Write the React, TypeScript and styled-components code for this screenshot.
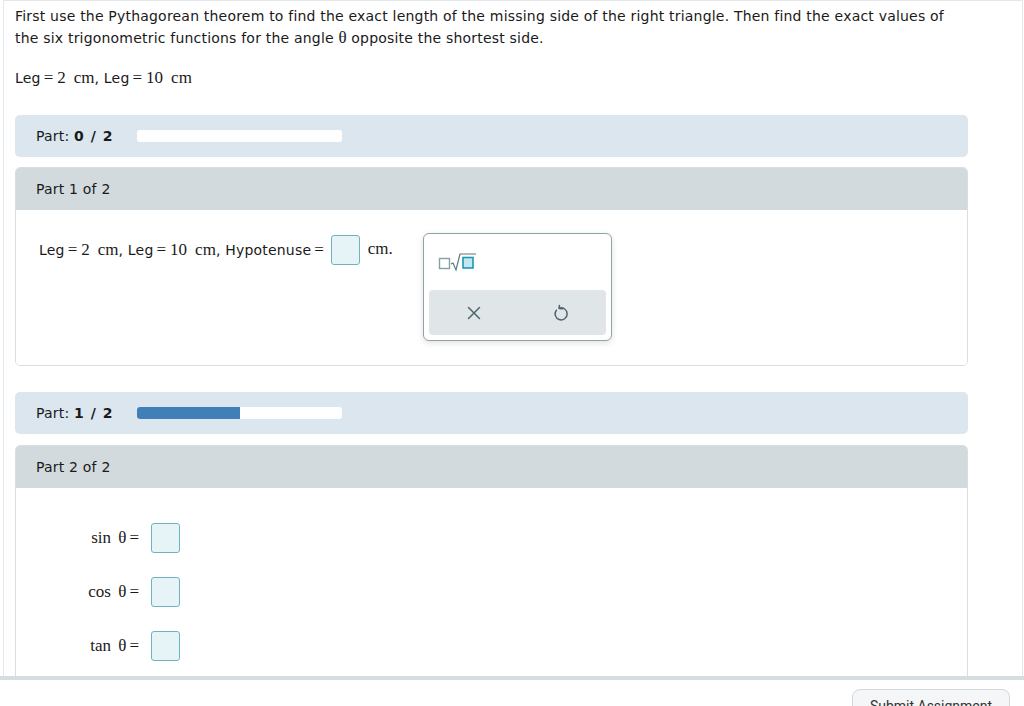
import React from 'react';
import styled, { createGlobalStyle } from 'styled-components';

const GlobalStyle = createGlobalStyle`
  html, body {
    margin: 0;
    padding: 0;
    background: #fff;
  }
  body {
    font-family: "DejaVu Sans", Verdana, sans-serif;
    color: #1a1a1a;
  }
`;

const Page = styled.div`
  width: 1024px;
  height: 706px;
  display: flex;
  flex-direction: column;
  overflow: hidden;
`;

const Main = styled.div`
  flex: 1;
  min-height: 0;
  overflow: hidden;
  margin-left: 3px;
  width: 1020px;
  box-sizing: border-box;
  border: 1px solid #e4e8ea;
  border-bottom: none;
  padding: 5px 54px 0 11px;
`;

const Footer = styled.div`
  height: 30px;
  border-top: 4px solid #d5dde0;
  display: flex;
  justify-content: flex-end;
  align-items: flex-start;
  padding: 9px 14px 0 0;
  box-sizing: border-box;
  overflow: hidden;
`;

const SubmitButton = styled.button`
  flex: none;
  width: 158px;
  height: 40px;
  border: 1px solid #cfd8dc;
  border-radius: 8px;
  background: #f4f6f7;
  font-family: Roboto, "Liberation Sans", sans-serif;
  font-size: 14px;
  line-height: 16px;
  color: #333;
  padding: 8px 0 0;
  margin: 0;
  display: flex;
  justify-content: center;
  align-items: flex-start;
`;

const Intro = styled.p`
  margin: 0;
  font-size: 14px;
  letter-spacing: 0.2px;
  line-height: 21px;
  width: 952px;
`;

const Given = styled.p`
  margin: 18px 0 0;
  font-size: 14px;
  letter-spacing: 0.2px;
  line-height: 22px;
`;

const Serif = styled.span`
  font-family: "Liberation Serif", "Times New Roman", serif;
  font-size: 17px;
  letter-spacing: 0;
`;

const MathUnit = styled(Serif)`
  margin-left: 8px;
`;

const Eq = styled.span`
  font-family: "Liberation Serif", serif;
  font-size: 17px;
  letter-spacing: 0;
  margin: 0 4px 0 3px;
`;

const ProgressBar = styled.div<{ $top: number }>`
  margin-top: ${(p) => p.$top}px;
  height: 42px;
  background: #dbe6ef;
  border-radius: 5px;
  display: flex;
  align-items: center;
  padding-left: 21px;
  font-size: 14px;
  letter-spacing: 0.2px;
`;

const PartLabel = styled.span`
  width: 101px;
  white-space: nowrap;
  b {
    font-weight: bold;
    letter-spacing: 1px;
  }
`;

const Track = styled.div`
  width: 205px;
  height: 12px;
  background: #fff;
  border-radius: 3px;
  overflow: hidden;
`;

const Fill = styled.div`
  height: 100%;
  background: #4180b6;
`;

const Card = styled.div<{ $top: number }>`
  margin-top: ${(p) => p.$top}px;
  border: 1px solid #d8dfe2;
  border-radius: 5px;
  overflow: hidden;
`;

const CardHeader = styled.div`
  height: 42px;
  background: #d2dadd;
  display: flex;
  align-items: center;
  padding-left: 20px;
  font-size: 14px;
  letter-spacing: 0.2px;
`;

const CardBody = styled.div<{ $height: number }>`
  position: relative;
  height: ${(p) => p.$height}px;
  background: #fff;
`;

const QuestionLine = styled.div`
  display: flex;
  align-items: center;
  padding: 25px 0 0 23px;
  font-size: 14px;
  letter-spacing: 0.2px;
`;

const AnswerBox = styled.span<{ $ml?: number }>`
  display: inline-block;
  width: 27px;
  height: 28px;
  background: #e6f4f8;
  border: 1px solid #6db3c2;
  border-radius: 3px;
  margin-left: ${(p) => p.$ml ?? 0}px;
`;

const Unit = styled.span`
  font-family: "Liberation Serif", serif;
  font-size: 17px;
  letter-spacing: 0;
  margin-left: 8px;
  position: relative;
  top: -1px;
`;

const Palette = styled.div`
  position: absolute;
  left: 407px;
  top: 23px;
  width: 189px;
  height: 108px;
  border: 1px solid #8fa3a9;
  border-radius: 6px;
  background: #fff;
  box-shadow: 0 2px 6px rgba(0, 0, 0, 0.12);
  display: flex;
  flex-direction: column;
  padding: 0 5px 5px;
  box-sizing: border-box;
`;

const TemplateRow = styled.div`
  height: 56px;
  display: flex;
  align-items: center;
  padding-left: 9px;
`;

const ToolRow = styled.div`
  flex: 1;
  background: #e0e6e8;
  border-radius: 4px;
  display: flex;
  justify-content: space-around;
  align-items: center;
  padding: 0 2px;
`;

const ToolButton = styled.span`
  width: 24px;
  height: 24px;
  display: flex;
  align-items: center;
  justify-content: center;
`;

const TrigGrid = styled.div`
  display: grid;
  grid-template-columns: 127px auto;
  column-gap: 8px;
  row-gap: 24px;
  padding-top: 35px;
  align-items: center;
  justify-items: start;
`;

const TrigLabel = styled.span`
  justify-self: end;
  font-family: "Liberation Serif", serif;
  font-size: 17px;
  word-spacing: 3px;
`;

function SqrtTemplate() {
  return (
    <svg width="40" height="20" viewBox="0 0 40 20">
      <rect x="1.5" y="6.5" width="10" height="10" fill="none" stroke="#8a9ea4" strokeWidth="1.4" />
      <path d="M13 12 L15 11 L18 18 L22 2 L38 2" fill="none" stroke="#5c7880" strokeWidth="1.2" />
      <rect x="25" y="5.5" width="10" height="10.5" fill="#c4e6ee" stroke="#1c9ab2" strokeWidth="1.6" />
    </svg>
  );
}

function ClearIcon() {
  return (
    <svg width="16" height="16" viewBox="0 0 16 16">
      <path d="M2.5 2.5 L13.5 13.5 M13.5 2.5 L2.5 13.5" stroke="#4a6670" strokeWidth="1.5" strokeLinecap="round" />
    </svg>
  );
}

function UndoIcon() {
  return (
    <svg width="18" height="18" viewBox="0 0 18 18">
      <path d="M7.2 4.2 A6 6 0 1 1 4.4 6.2" fill="none" stroke="#4a6670" strokeWidth="1.5" strokeLinecap="round" />
      <path d="M7.4 1.4 L7.2 4.4 L10.2 4.8" fill="none" stroke="#4a6670" strokeWidth="1.5" strokeLinecap="round" strokeLinejoin="round" />
    </svg>
  );
}

function Progress({ done, top }: { done: number; top: number }) {
  return (
    <ProgressBar $top={top}>
      <PartLabel>
        Part: <b>{done} / 2</b>
      </PartLabel>
      <Track>
        <Fill style={{ width: `${(done / 2) * 100}%` }} />
      </Track>
    </ProgressBar>
  );
}

function Legs() {
  return (
    <>
      Leg<Eq>=</Eq>
      <Serif>2</Serif>
      <MathUnit>cm</MathUnit>, Leg<Eq>=</Eq>
      <Serif>10</Serif>
      <MathUnit>cm</MathUnit>
    </>
  );
}

export default function App() {
  const trig = ['sin', 'cos', 'tan'];
  return (
    <Page>
      <GlobalStyle />
      <Main>
        <Intro>
          First use the Pythagorean theorem to find the exact length of the missing side of the right triangle. Then find
          the exact values of the six trigonometric functions for the angle <Serif>θ</Serif> opposite the shortest side.
        </Intro>
        <Given>
          <Legs />
        </Given>

        <Progress done={0} top={26} />
        <Card $top={10}>
          <CardHeader>Part 1 of 2</CardHeader>
          <CardBody $height={155}>
            <QuestionLine>
              <Legs />
              <span>,&nbsp;Hypotenuse</span>
              <Eq>=</Eq>
              <AnswerBox $ml={3} />
              <Unit>cm.</Unit>
            </QuestionLine>
            <Palette>
              <TemplateRow>
                <SqrtTemplate />
              </TemplateRow>
              <ToolRow>
                <ToolButton>
                  <ClearIcon />
                </ToolButton>
                <ToolButton>
                  <UndoIcon />
                </ToolButton>
              </ToolRow>
            </Palette>
          </CardBody>
        </Card>

        <Progress done={1} top={26} />
        <Card $top={11}>
          <CardHeader>Part 2 of 2</CardHeader>
          <CardBody $height={220}>
            <TrigGrid>
              {trig.map((f) => (
                <React.Fragment key={f}>
                  <TrigLabel>
                    {f} θ<Eq>=</Eq>
                  </TrigLabel>
                  <AnswerBox />
                </React.Fragment>
              ))}
            </TrigGrid>
          </CardBody>
        </Card>
      </Main>
      <Footer>
        <SubmitButton>Submit Assignment</SubmitButton>
      </Footer>
    </Page>
  );
}
